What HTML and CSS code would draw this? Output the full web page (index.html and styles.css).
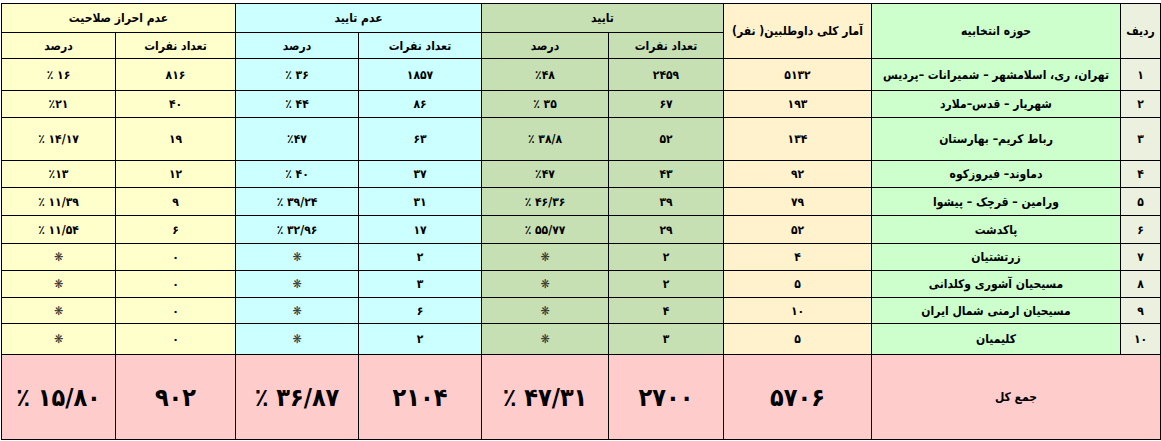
FILE: index.html
```html
<!DOCTYPE html>
<html lang="fa" dir="rtl">
<head>
<meta charset="utf-8">
<title>آمار داوطلبین</title>
<link rel="stylesheet" href="styles.css">
</head>
<body>
<table class="stats">
  <colgroup>
    <col class="c-radif">
    <col class="c-hoze">
    <col class="c-amar">
    <col class="c-ok">
    <col class="c-ok c-ok-p">
    <col class="c-no">
    <col class="c-no">
    <col class="c-na">
    <col class="c-na c-na-p">
  </colgroup>
  <thead>
    <tr class="h1">
      <th rowspan="2" class="hsm">ردیف</th>
      <th rowspan="2" class="hsm">حوزه انتخابیه</th>
      <th rowspan="2" class="hsm">آمار کلی داوطلبین( نفر)</th>
      <th colspan="2">تایید</th>
      <th colspan="2">عدم تایید</th>
      <th colspan="2">عدم احراز صلاحیت</th>
    </tr>
    <tr class="h2">
      <th>تعداد نفرات</th><th>درصد</th>
      <th>تعداد نفرات</th><th>درصد</th>
      <th>تعداد نفرات</th><th>درصد</th>
    </tr>
  </thead>
  <tbody>
    <tr class="r32">
      <td>۱</td><td>تهران، ری، اسلامشهر – شمیرانات –پردیس</td><td>۵۱۳۲</td>
      <td>۲۴۵۹</td><td><span class="n">٪۴۸</span></td><td>۱۸۵۷</td><td><span class="n">٪ ۳۶</span></td><td>۸۱۶</td><td><span class="n">٪ ۱۶</span></td>
    </tr>
    <tr class="r27">
      <td>۲</td><td>شهریار – قدس–ملارد</td><td>۱۹۳</td>
      <td>۶۷</td><td><span class="n">٪ ۳۵</span></td><td>۸۶</td><td><span class="n">٪ ۴۴</span></td><td>۴۰</td><td><span class="n">٪۲۱</span></td>
    </tr>
    <tr class="r43">
      <td>۳</td><td>رباط کریم– بهارستان</td><td>۱۳۴</td>
      <td>۵۲</td><td><span class="n">٪ ۳۸/۸</span></td><td>۶۳</td><td><span class="n">٪۴۷</span></td><td>۱۹</td><td><span class="n">٪ ۱۴/۱۷</span></td>
    </tr>
    <tr class="r27">
      <td>۴</td><td>دماوند– فیروزکوه</td><td>۹۲</td>
      <td>۴۳</td><td><span class="n">٪۴۷</span></td><td>۳۷</td><td><span class="n">٪ ۴۰</span></td><td>۱۲</td><td><span class="n">٪۱۳</span></td>
    </tr>
    <tr class="r28">
      <td>۵</td><td>ورامین – قرچک – پیشوا</td><td>۷۹</td>
      <td>۳۹</td><td><span class="n">٪ ۴۶/۳۶</span></td><td>۳۱</td><td><span class="n">٪ ۳۹/۲۴</span></td><td>۹</td><td><span class="n">٪ ۱۱/۳۹</span></td>
    </tr>
    <tr class="r28">
      <td>۶</td><td>پاکدشت</td><td>۵۲</td>
      <td>۲۹</td><td><span class="n">٪ ۵۵/۷۷</span></td><td>۱۷</td><td><span class="n">٪ ۳۲/۹۶</span></td><td>۶</td><td><span class="n">٪ ۱۱/۵۴</span></td>
    </tr>
    <tr class="r27">
      <td>۷</td><td>زرتشتیان</td><td>۴</td>
      <td>۲</td><td class="star">❋</td><td>۲</td><td class="star">❋</td><td>۰</td><td class="star">❋</td>
    </tr>
    <tr class="r27">
      <td>۸</td><td>مسیحیان آشوری وکلدانی</td><td>۵</td>
      <td>۲</td><td class="star">❋</td><td>۳</td><td class="star">❋</td><td>۰</td><td class="star">❋</td>
    </tr>
    <tr class="r26">
      <td>۹</td><td>مسیحیان ارمنی شمال ایران</td><td>۱۰</td>
      <td>۴</td><td class="star">❋</td><td>۶</td><td class="star">❋</td><td>۰</td><td class="star">❋</td>
    </tr>
    <tr class="r31">
      <td>۱۰</td><td>کلیمیان</td><td>۵</td>
      <td>۳</td><td class="star">❋</td><td>۲</td><td class="star">❋</td><td>۰</td><td class="star">❋</td>
    </tr>
  </tbody>
  <tfoot>
    <tr class="total">
      <td colspan="2" class="label">جمع کل</td>
      <td>۵۷۰۶</td>
      <td>۲۷۰۰</td>
      <td><span class="n">٪ ۴۷/۳۱</span></td>
      <td>۲۱۰۴</td>
      <td><span class="n">٪ ۳۶/۸۷</span></td>
      <td>۹۰۲</td>
      <td><span class="n">٪ ۱۵/۸۰</span></td>
    </tr>
  </tfoot>
</table>
</body>
</html>
```

FILE: styles.css
```css
html, body {
  margin: 0;
  overflow: hidden;
  background: #ffffff;
}

body {
  padding: 3px 0 0 3px;
  font-family: "DejaVu Sans Condensed", "DejaVu Sans", sans-serif;
  font-stretch: condensed;
  font-weight: bold;
  color: #000;
}

.stats {
  border-collapse: collapse;
  table-layout: fixed;
  width: 1159px;
  direction: rtl;
}

.stats th,
.stats td {
  border: 1px solid #000;
  padding: 0;
  text-align: center;
  vertical-align: middle;
  white-space: nowrap;
  overflow: hidden;
  font-size: 12px;
  font-weight: bold;
}

.c-radif { width: 40px; background: #ebf1de; }
.c-hoze  { width: 249px; background: #ccffcc; }
.c-amar  { width: 148px; background: #fff2cc; }
.c-ok    { width: 115px; background: #c6e0b4; }
.c-ok-p  { width: 127px; }
.c-no    { width: 123px; background: #ccffff; }
.c-na    { width: 120px; background: #ffffcc; }
.c-na-p  { width: 114px; }

.h1 { height: 29px; }
.h2 { height: 26px; }
.r26 { height: 26px; }
.r27 { height: 27px; }
.r28 { height: 28px; }
.r31 { height: 31px; }
.r32 { height: 32px; }
.r43 { height: 43px; }

.n {
  direction: ltr;
  unicode-bidi: bidi-override;
}

.star {
  font-size: 10px;
  color: #333;
}

.total {
  height: 85px;
}

.total td {
  background: #ffcccc;
  font-size: 25px;
}

.total td.label {
  font-size: 12px;
}
```
